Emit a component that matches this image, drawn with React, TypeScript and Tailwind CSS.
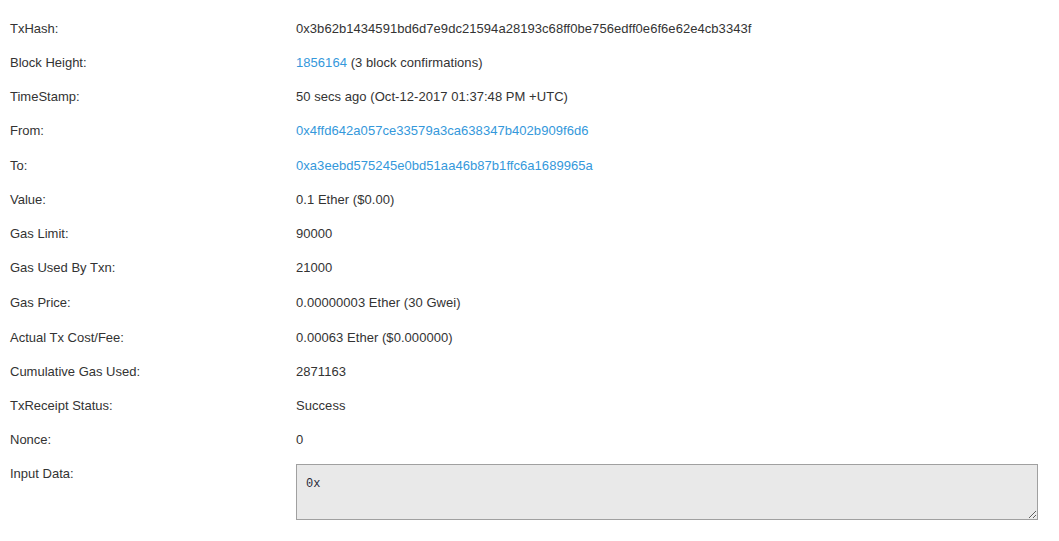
const rows: { label: string; value: React.ReactNode; h: string }[] = [
  {
    label: "TxHash:",
    value: "0x3b62b1434591bd6d7e9dc21594a28193c68ff0be756edff0e6f6e62e4cb3343f",
    h: "h-[34px]",
  },
  {
    label: "Block Height:",
    value: (
      <>
        <a href="#" className="text-[#3498db]">
          1856164
        </a>{" "}
        (3 block confirmations)
      </>
    ),
    h: "h-[34px]",
  },
  { label: "TimeStamp:", value: "50 secs ago (Oct-12-2017 01:37:48 PM +UTC)", h: "h-[34px]" },
  {
    label: "From:",
    value: (
      <a href="#" className="text-[#3498db]">
        0x4ffd642a057ce33579a3ca638347b402b909f6d6
      </a>
    ),
    h: "h-[34px]",
  },
  {
    label: "To:",
    value: (
      <a href="#" className="text-[#3498db]">
        0xa3eebd575245e0bd51aa46b87b1ffc6a1689965a
      </a>
    ),
    h: "h-[35px]",
  },
  { label: "Value:", value: "0.1 Ether ($0.00)", h: "h-[34px]" },
  { label: "Gas Limit:", value: "90000", h: "h-[34px]" },
  { label: "Gas Used By Txn:", value: "21000", h: "h-[34px]" },
  { label: "Gas Price:", value: "0.00000003 Ether (30 Gwei)", h: "h-[36px]" },
  { label: "Actual Tx Cost/Fee:", value: "0.00063 Ether ($0.000000)", h: "h-[34px]" },
  { label: "Cumulative Gas Used:", value: "2871163", h: "h-[34px]" },
  { label: "TxReceipt Status:", value: "Success", h: "h-[34px]" },
  { label: "Nonce:", value: "0", h: "h-[34px]" },
];

export default function App() {
  return (
    <div className="min-h-screen bg-white font-['Liberation_Sans',Arial,sans-serif] text-[13px] leading-5 text-[#333]">
      <div className="pt-[12px]">
        {rows.map((row) => (
          <div key={row.label} className={`flex items-center ${row.h}`}>
            <div className="w-[296px] shrink-0 pl-[10px]">{row.label}</div>
            <div className="whitespace-nowrap tracking-[0.05px]">{row.value}</div>
          </div>
        ))}

        <div className="flex">
          <div className="w-[296px] shrink-0 pl-[10px] pt-[7px]">Input Data:</div>
          <textarea
            readOnly
            defaultValue="0x"
            className="mt-[7px] h-[56px] w-[742px] resize border border-[#a0a0a0] bg-[#e9e9e9] px-[9px] pt-[11px] pb-[6px] font-['Liberation_Mono','Courier_New',monospace] text-[12px] leading-4 text-[#2a2a3a] outline-none"
          />
        </div>
      </div>
    </div>
  );
}
